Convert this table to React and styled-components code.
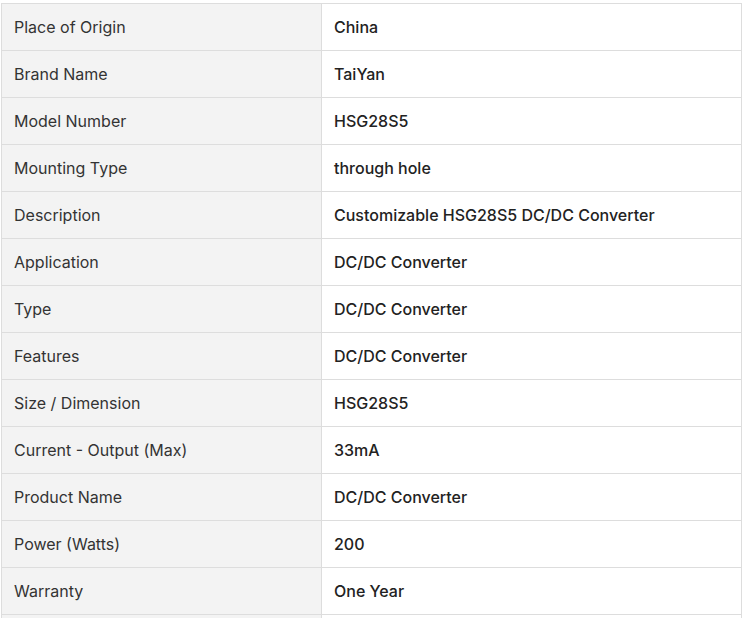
import React from "react";
import styled, { createGlobalStyle } from "styled-components";

const Global = createGlobalStyle`
  html, body { margin: 0; padding: 0; background: #fff; }
  body { font-family: Inter, "Noto Sans", sans-serif; }
`;

const Wrap = styled.div`
  padding: 3px 0 0 1px;
`;

const Table = styled.table`
  width: 741px;
  border-collapse: collapse;
  table-layout: fixed;
  font-family: Inter, "Noto Sans", sans-serif;
  font-size: 16px;
  color: #333;
`;

const Row = styled.tr`
  height: 47px;
`;

const Cell = styled.td`
  border: 1px solid #dddddd;
  padding: 0 12px;
  vertical-align: middle;
  background: ${(p) => (p.$label ? "#f3f3f3" : "#fff")};
  color: ${(p) => (p.$label ? "#333" : "#222")};
  font-weight: ${(p) => (p.$label ? 400 : 500)};
`;

const rows = [
  ["Place of Origin", "China"],
  ["Brand Name", "TaiYan"],
  ["Model Number", "HSG28S5"],
  ["Mounting Type", "through hole"],
  ["Description", "Customizable HSG28S5 DC/DC Converter"],
  ["Application", "DC/DC Converter"],
  ["Type", "DC/DC Converter"],
  ["Features", "DC/DC Converter"],
  ["Size / Dimension", "HSG28S5"],
  ["Current - Output (Max)", "33mA"],
  ["Product Name", "DC/DC Converter"],
  ["Power (Watts)", "200"],
  ["Warranty", "One Year"],
  ["", ""],
];

export default function App() {
  return (
    <>
      <Global />
      <Wrap>
        <Table>
          <colgroup>
            <col style={{ width: 320 }} />
            <col />
          </colgroup>
          <tbody>
            {rows.map(([k, v], i) => (
              <Row key={i}>
                <Cell $label>{k}</Cell>
                <Cell>{v}</Cell>
              </Row>
            ))}
          </tbody>
        </Table>
      </Wrap>
    </>
  );
}
